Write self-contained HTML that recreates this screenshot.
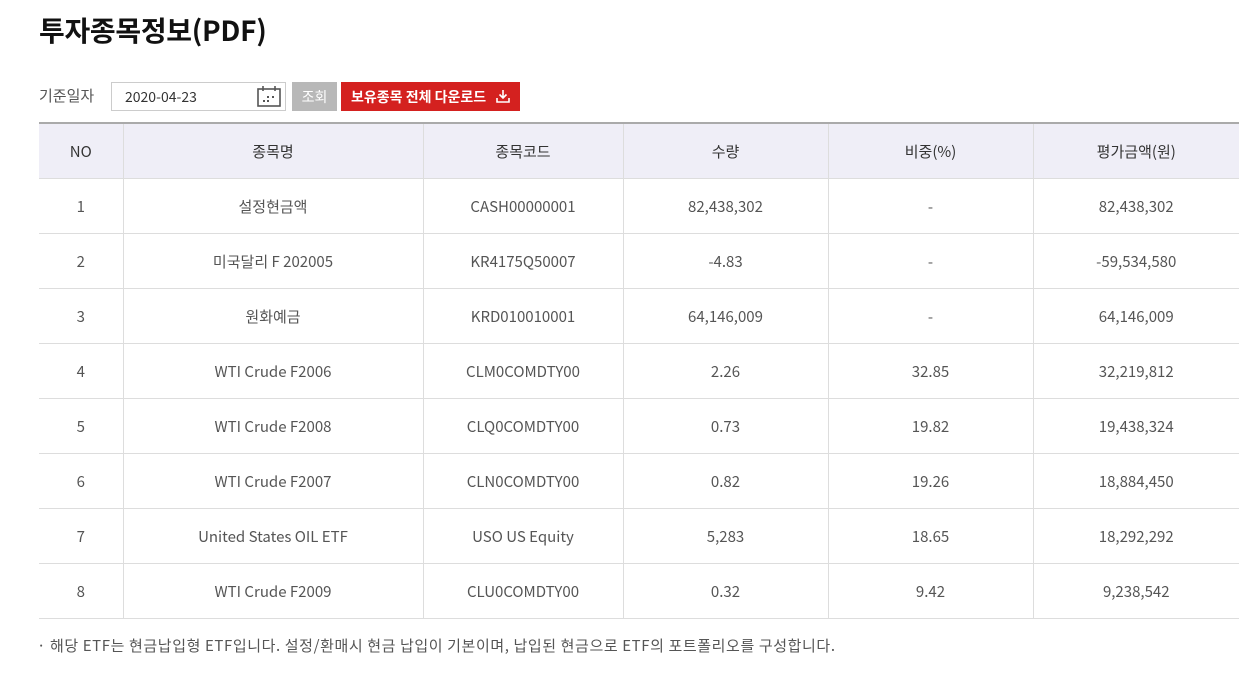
<!DOCTYPE html>
<html><head><meta charset="utf-8"><style>
body{margin:0;background:#fff;font-family:"Noto Sans CJK KR","Liberation Sans",sans-serif;color:#555;width:1258px;height:687px;overflow:hidden;position:relative}
h1{position:absolute;left:39px;top:10px;margin:0;font-size:28px;font-weight:bold;color:#111;letter-spacing:-0.3px;line-height:40px}
.lbl{position:absolute;left:39px;top:85px;font-size:15px;color:#555;line-height:22px}
.date{position:absolute;left:111px;top:82px;width:175px;height:29px;border:1px solid #ccc;box-sizing:border-box;font-size:14px;color:#333;line-height:29px;padding-left:13px}
.cal{position:absolute;right:4px;top:3px}
.btn1{position:absolute;left:292px;top:82px;width:45px;height:29px;background:#b8b8b8;color:#fff;font-size:14px;text-align:center;line-height:30px}
.btn2{position:absolute;left:341px;top:82px;width:179px;height:29px;background:#d4211f;color:#fff;font-size:14px;font-weight:bold;line-height:30px;padding-left:10px;box-sizing:border-box}
.btn2 svg{position:absolute;right:10px;top:8px}
table{position:absolute;left:39px;top:122px;width:1200px;border-collapse:collapse;table-layout:fixed}
th,td{padding:2px 0 0 0;line-height:20px}
th{background:#efeef7;height:52px;font-weight:normal;font-size:15px;color:#333;border-top:2px solid #aaa;border-left:1px solid #ddd}
td{height:52px;text-align:center;font-size:15px;color:#555;border-top:1px solid #ddd;border-left:1px solid #ddd}
tr>*:first-child{border-left:none}
tr:last-child td{border-bottom:1px solid #ddd}
.note{position:absolute;left:37px;top:635px;font-size:15px;letter-spacing:0.6px;color:#555;line-height:22px}
</style></head><body>
<h1>투자종목정보(PDF)</h1>
<div class="lbl">기준일자</div>
<div class="date">2020-04-23
<svg class="cal" width="24" height="21" viewBox="0 0 24 21"><rect x="1" y="3" width="22" height="17" fill="none" stroke="#555" stroke-width="1.6"/><line x1="6" y1="0" x2="6" y2="5" stroke="#555" stroke-width="1.6"/><line x1="18" y1="0" x2="18" y2="5" stroke="#555" stroke-width="1.6"/><rect x="10" y="10" width="2" height="2" fill="#555"/><rect x="15" y="10" width="2" height="2" fill="#555"/><rect x="6" y="14" width="2" height="2" fill="#555"/><rect x="10" y="14" width="2" height="2" fill="#555"/></svg></div>
<div class="btn1">조회</div>
<div class="btn2">보유종목 전체 다운로드
<svg width="14" height="13" viewBox="0 0 14 13"><path d="M7 0v8M3.5 4.5L7 8l3.5-3.5M1 8v4h12V8" fill="none" stroke="#fff" stroke-width="1.6"/></svg></div>
<table>
<colgroup><col style="width:84px"><col style="width:300px"><col style="width:200px"><col style="width:205px"><col style="width:205px"><col style="width:206px"></colgroup>
<tr><th>NO</th><th>종목명</th><th>종목코드</th><th>수량</th><th>비중(%)</th><th>평가금액(원)</th></tr>
<tr><td>1</td><td>설정현금액</td><td>CASH00000001</td><td>82,438,302</td><td>-</td><td>82,438,302</td></tr>
<tr><td>2</td><td>미국달리 F 202005</td><td>KR4175Q50007</td><td>-4.83</td><td>-</td><td>-59,534,580</td></tr>
<tr><td>3</td><td>원화예금</td><td>KRD010010001</td><td>64,146,009</td><td>-</td><td>64,146,009</td></tr>
<tr><td>4</td><td>WTI Crude F2006</td><td>CLM0COMDTY00</td><td>2.26</td><td>32.85</td><td>32,219,812</td></tr>
<tr><td>5</td><td>WTI Crude F2008</td><td>CLQ0COMDTY00</td><td>0.73</td><td>19.82</td><td>19,438,324</td></tr>
<tr><td>6</td><td>WTI Crude F2007</td><td>CLN0COMDTY00</td><td>0.82</td><td>19.26</td><td>18,884,450</td></tr>
<tr><td>7</td><td>United States OIL ETF</td><td>USO US Equity</td><td>5,283</td><td>18.65</td><td>18,292,292</td></tr>
<tr><td>8</td><td>WTI Crude F2009</td><td>CLU0COMDTY00</td><td>0.32</td><td>9.42</td><td>9,238,542</td></tr>
</table>
<div class="note">· 해당 ETF는 현금납입형 ETF입니다. 설정/환매시 현금 납입이 기본이며, 납입된 현금으로 ETF의 포트폴리오를 구성합니다.</div>
</body></html>
